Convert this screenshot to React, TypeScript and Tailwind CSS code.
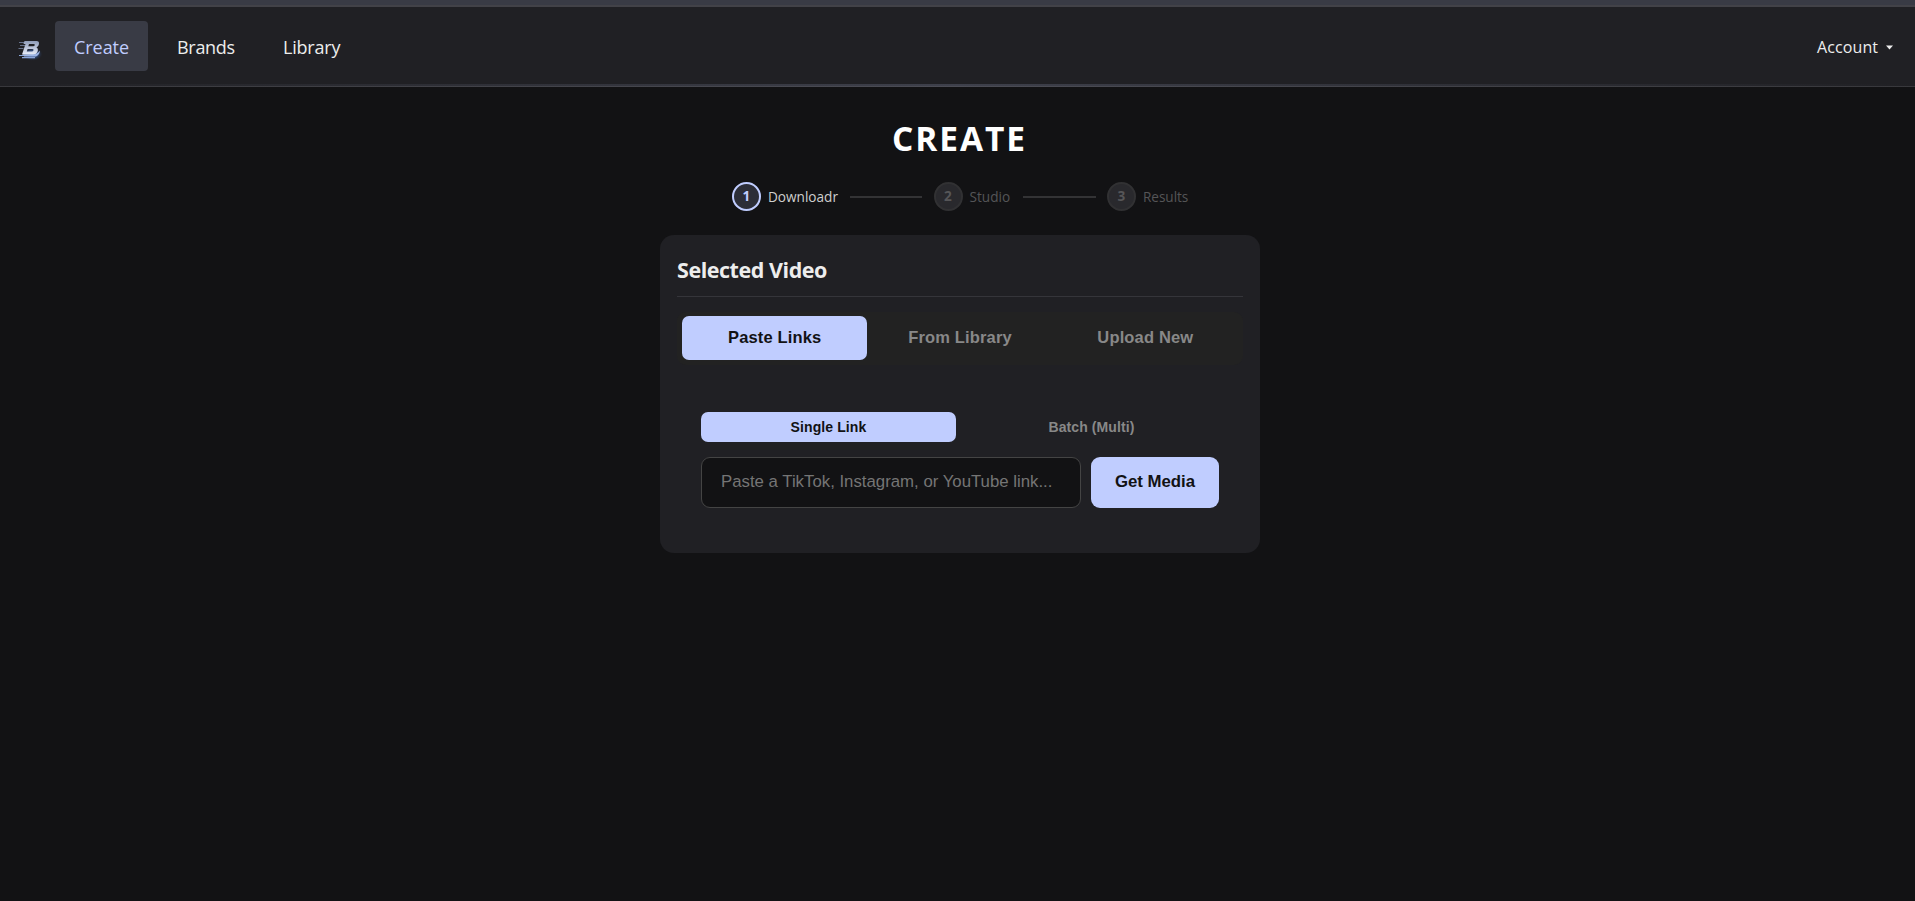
import React from "react";

const steps = [
  { n: 1, label: "Downloadr", active: true, labelBox: "w-[71px]", line: "w-[72px]" },
  { n: 2, label: "Studio", active: false, labelBox: "w-[42px]", line: "w-[73px]" },
  { n: 3, label: "Results", active: false, labelBox: "w-[46px] tracking-[-0.05px]", line: "" },
];

function Logo() {
  return (
    <svg width="26" height="22" viewBox="0 0 26 22" className="block shrink-0">
      <defs>
        <linearGradient id="metal" x1="0" y1="0" x2="0" y2="1">
          <stop offset="0" stopColor="#8f9cb8" />
          <stop offset="1" stopColor="#e6ecfa" />
        </linearGradient>
        <radialGradient id="glow">
          <stop offset="0" stopColor="#5f86cc" />
          <stop offset="0.55" stopColor="#34548f" stopOpacity="0.7" />
          <stop offset="1" stopColor="#202024" stopOpacity="0" />
        </radialGradient>
      </defs>
      <ellipse cx="15.5" cy="15" rx="10.5" ry="7" fill="url(#glow)" />
      <path d="M2 3.5h6M3 6.5h5M1.5 9.5h5" stroke="#68738c" strokeWidth="1" />
      <path d="M2 16.5h7M5 18.7h13" stroke="#8ba6da" strokeWidth="1.2" />
      <path d="M7 17.5L19 17.5Q22.500 16 23 11.5Q20 15.5 16 15.5H6Z" fill="#9db6e8" />
      <path
        fillRule="evenodd"
        d="M7.5 2H19.500q3 0 2.400 3.200q-.5 2.600-2.400 3.200q2 .8 1.300 3.400q-.8 3.700-4.600 3.700H5L8.500 5H6.500ZM12 5L11.300 7.300H16q1.500 0 1.800-1.200q.2-1.100-1.200-1.100ZM10.600 9.900L9.800 12.600H14.700q1.500 0 1.800-1.400q.3-1.200-1.200-1.200Z"
        fill="url(#metal)"
      />
    </svg>
  );
}

export default function App() {
  return (
    <div className="flex h-[901px] w-full flex-col overflow-hidden bg-[#121214] font-['Segoe_UI','Open_Sans',sans-serif] text-[#ededed]">
      <div className="h-[5px] shrink-0 bg-[#393b45]" />
      <div className="h-[2px] shrink-0 bg-[#424248]" />
      <header className="flex h-[80px] shrink-0 flex-col bg-[#202024]">
        <div className="flex h-[77px] items-start justify-between pr-[22px] pl-[17px]">
          <div className="flex items-start">
            <div className="mt-[32px] w-[38px]">
              <Logo />
            </div>
            <nav className="mt-[14px] flex text-[18px] leading-[52px]">
              <a className="h-[50px] w-[93px] rounded-[4px] bg-[#393b45] pl-[19px] tracking-[-0.05px] text-[#c0cdff]">Create</a>
              <a className="ml-[10px] h-[50px] w-[96px] pl-[19px] tracking-[-0.3px]">Brands</a>
              <a className="ml-[10px] h-[50px] w-[96px] pl-[19px] tracking-[-0.2px]">Library</a>
            </nav>
          </div>
          <button className="mt-[14px] flex h-[50px] items-center text-[16px]">
            <span className="w-[69px] pt-[2px] text-left tracking-[0.1px]">Account</span>
            <svg width="7" height="5" viewBox="0 0 7 5" className="mt-[2px]">
              <path d="M0 .5H7L3.500 4.500Z" fill="#ededed" />
            </svg>
          </button>
        </div>
        <div className="h-[2px] bg-linear-to-r from-[#202024] via-[#3e404b] to-[#202024]" />
        <div className="h-px bg-linear-to-r from-[#38383c] via-[#4b4c55] to-[#38383c]" />
      </header>

      <main className="ml-[660px] flex w-[600px] flex-col">
        <h1 className="mt-[27px] h-[49px] pl-[232px] text-[33.500px] leading-[48px] font-bold tracking-[1.900px] text-white">CREATE</h1>

        <ol className="mt-[19px] ml-[72px] flex h-[29px] items-center">
          {steps.map((s) => (
            <li key={s.n} className="flex items-center">
              <span
                className={
                  s.active
                    ? "flex size-[29px] items-center justify-center rounded-full border-2 border-[#c0cdff] bg-[#2c2e38] text-[13.6px] font-bold text-[#c0cdff]"
                    : "flex size-[29px] items-center justify-center rounded-full border-2 border-[#313133] bg-[#29292d] text-[13.6px] font-bold text-[#565658]"
                }
              >
                {s.n}
              </span>
              <span className={`ml-[7px] text-[13.6px] leading-[20px] whitespace-nowrap ${s.labelBox} ${s.active ? "text-[#cfcfcf]" : "text-[#555557]"}`}>
                {s.label}
              </span>
              {s.line && <span className={`mr-[11.5px] ml-[11px] h-[2px] bg-[#333335] ${s.line}`} />}
            </li>
          ))}
        </ol>

        <section className="mt-[24px] h-[318px] rounded-[14px] bg-[#202024] px-[17px]">
          <h2 className="h-[62px] border-b border-[#35353a] pt-[19px] text-[21.500px] leading-[32px] font-bold tracking-[-0.450px]">Selected Video</h2>

          <div className="mt-[15px] grid h-[53px] grid-cols-3 rounded-[9px] bg-[#222222] px-[5px] pt-[4px] font-['Liberation_Sans',sans-serif] text-[16.5px] font-bold tracking-[0.15px] text-[#888888]">
            <button className="h-[44px] rounded-[7px] bg-[#c0cdff] pb-[1px] text-[#121214]">Paste Links</button>
            <button className="h-[44px] pb-[1px]">From Library</button>
            <button className="h-[44px] pb-[1px]">Upload New</button>
          </div>

          <div className="mt-[47px] ml-[24px] w-[518px] font-['Liberation_Sans',sans-serif]">
            <div className="grid h-[30px] grid-cols-2 gap-[8px] text-[14px] font-bold tracking-[0.1px] text-[#888888]">
              <button className="rounded-[7px] bg-[#c0cdff] text-[#121214]">Single Link</button>
              <button>Batch (Multi)</button>
            </div>
            <div className="mt-[15px] flex h-[51px] gap-[10px]">
              <input
                className="w-[380px] rounded-[9px] border border-[#444444] bg-[#121214] pr-4 pb-[2px] pl-[19px] text-[16.8px] outline-none placeholder:text-[#757575]"
                placeholder="Paste a TikTok, Instagram, or YouTube link..."
              />
              <button className="w-[128px] rounded-[9px] bg-[#c0cdff] pb-[2px] text-[16.8px] font-bold text-[#121214]">Get Media</button>
            </div>
          </div>
        </section>
      </main>
    </div>
  );
}
